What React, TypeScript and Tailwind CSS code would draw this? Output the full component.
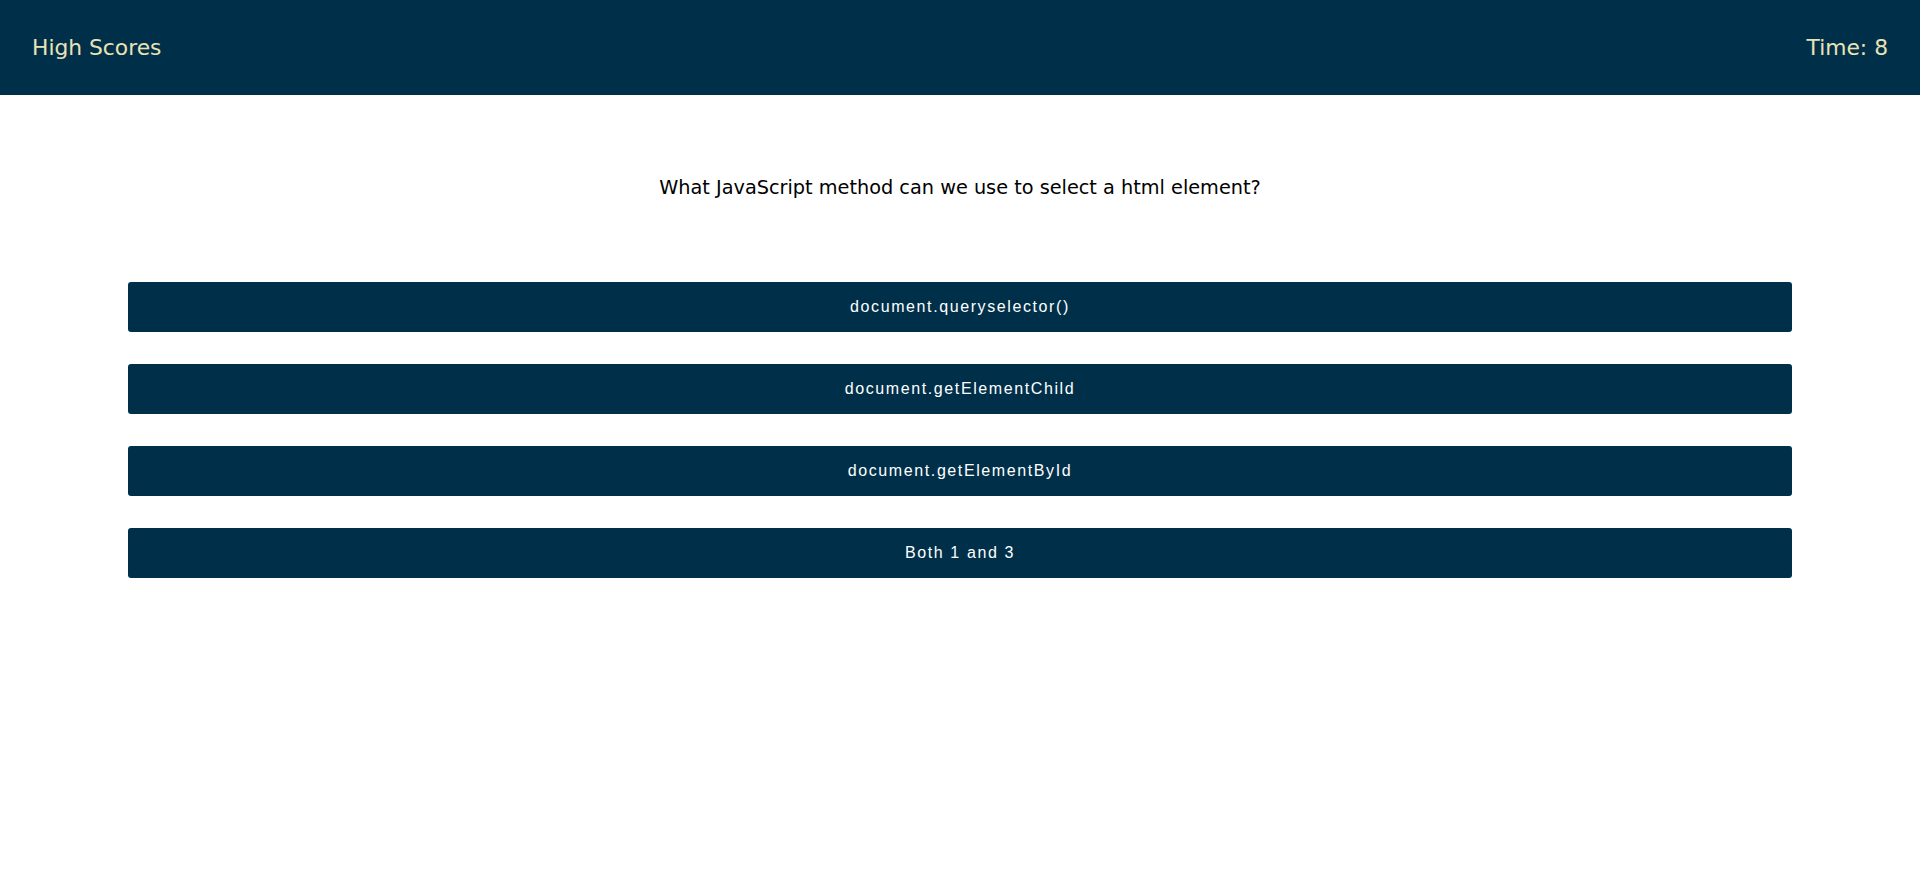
export default function App() {
    const answers = [
        "document.queryselector()",
        "document.getElementChild",
        "document.getElementById",
        "Both 1 and 3",
    ]

    const answerStyle = "w-full h-[50px] flex justify-center items-center bg-[#003049] text-white rounded-[3px] text-[16px] tracking-[1.6px] font-['Liberation_Sans',Arial,sans-serif] cursor-pointer"

    return (
        <div className="w-full min-h-[880px] bg-white font-['DejaVu_Sans',sans-serif]">

            <header className="h-[95px] bg-[#003049] flex justify-between items-center px-[32px] pt-[2px] text-[#eae2b7] text-[21.8px]">
                <a className="cursor-pointer">High Scores</a>
                <span>Time: 8</span>
            </header>

            <main className="flex flex-col items-center">
                <p className="mt-[79px] text-[19.3px] text-black">What JavaScript method can we use to select a html element?</p>

                <div className="w-full px-[128px] mt-[79px] flex flex-col gap-[32px]">
                    {answers.map(answer => (
                        <button key={answer} className={answerStyle}>{answer}</button>
                    ))}
                </div>
            </main>

        </div>
    )
}
